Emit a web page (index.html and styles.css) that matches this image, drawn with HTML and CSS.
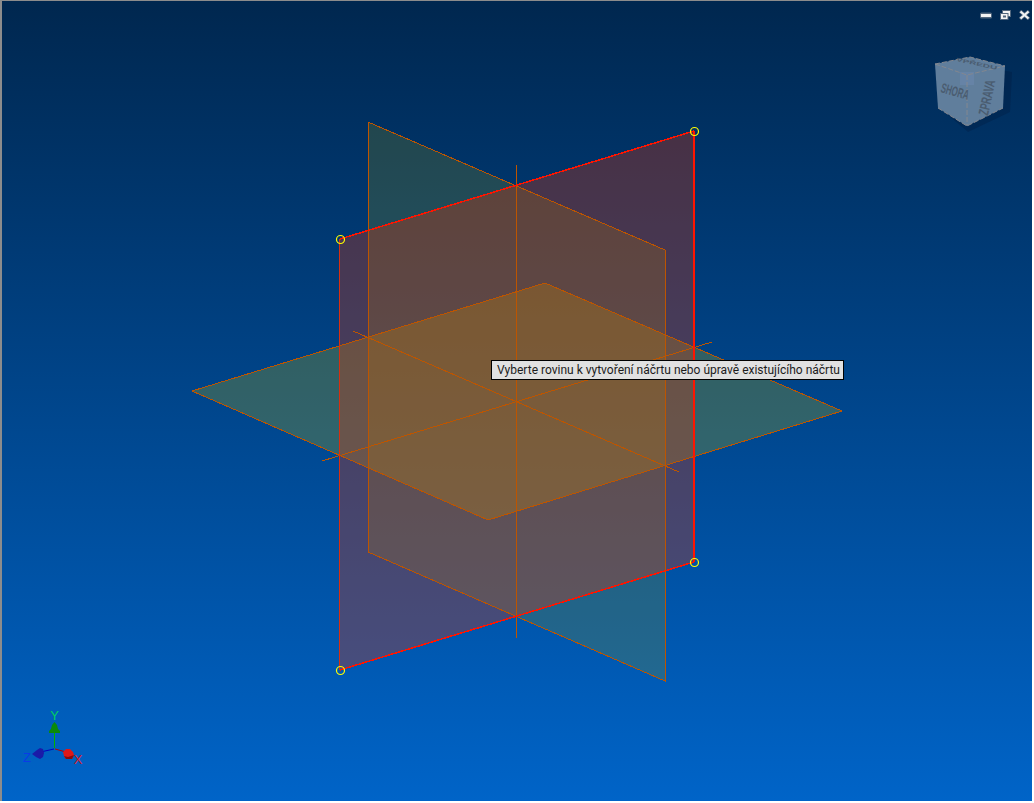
FILE: index.html
```html
<!DOCTYPE html>
<html lang="en">
<head>
    <meta charset="UTF-8">
    <meta name="viewport" content="width=device-width, initial-scale=1.0">
    <title>Vyberte rovinu</title>
    <link rel="stylesheet" href="styles.css">
</head>
<body>
    <div class="viewport">
        <!-- Window buttons -->
        <div class="window-btns">
            <svg class="win-icon" width="12" height="10" viewBox="0 0 12 10"><rect class="icon-halo" x="0" y="2.500" width="12" height="6" rx="1.500"/><rect class="icon-ink" x="1" y="4" width="10" height="3"/></svg>
            <svg class="win-icon" width="11" height="10" viewBox="0 0 11 10"><path class="icon-halo" d="M0 3h2V0h9v7H8.500v3H0z"/><path class="icon-ink" d="M1 4h6.500v5H1zM3 5.500V7.500h3V5.500z" fill-rule="evenodd"/><path class="icon-ink" d="M3 1h7v5H8.500V3H3z"/></svg>
            <svg class="win-icon" width="11" height="10" viewBox="0 0 11 10"><path class="icon-x-halo" d="M1 1l9 8M10 1l-9 8"/><path class="icon-x" d="M1.500 1.500l8 7M9.500 1.500l-8 7"/></svg>
        </div>

        <!-- The three origin planes -->
        <svg class="scene" width="1030" height="800" viewBox="2 1 1030 800">
            <polygon class="plane plane-top" points="192,391 545,283 842,411 488,520"/>
            <polygon class="plane plane-side" points="368,122 665,250 665,681 368,552"/>
            <polygon class="plane plane-front" points="340,239 694,131 694,562 340,670"/>

            <polygon class="edge" points="368,122 665,250 665,681 368,552"/>
            <polygon class="edge" points="192,391 545,283 842,411 488,520"/>
            <line class="edge" x1="516" y1="165" x2="516" y2="638"/>
            <line class="edge" x1="322" y1="461" x2="712" y2="342"/>
            <line class="edge" x1="353" y1="331" x2="679" y2="472"/>

            <line class="edge-red thin" x1="339" y1="239" x2="339" y2="670"/>
            <line class="edge-red" x1="340" y1="239" x2="694" y2="131"/>
            <line class="edge-red" x1="694" y1="131" x2="694" y2="562"/>
            <line class="edge-red" x1="694" y1="562" x2="340" y2="670"/>

            <circle class="handle" cx="340.500" cy="239.500" r="4"/>
            <circle class="handle" cx="694.500" cy="131.500" r="4"/>
            <circle class="handle" cx="694.500" cy="562.500" r="4"/>
            <circle class="handle" cx="340.500" cy="670.500" r="4"/>

            <!-- View cube -->
            <g class="cube">
                <polygon class="cube-shadow" points="942,110 968,132 1010,112 1012,72 1000,70 975,100"/>
                <polygon class="cube-face" points="935,64 970,57 1005,66 1003,108 967,126 938,108"/>
                <rect class="cube-corner" x="960" y="72" width="14" height="13"/>
                <path class="cube-seam" d="M935 64L967 75L1005 66M967 75V126M938 108L967 126L1003 108M935 64L970 57L1005 66"/>
                <text class="cube-label" transform="translate(940,92) rotate(16) scale(.72,1.250)">SHORA</text>
                <text class="cube-label" transform="translate(988,116) rotate(-78) scale(.82,1.300)">ZPRAVA</text>
                <text class="cube-label cube-label-top" transform="translate(956,61) rotate(12) scale(1,.5)">VPŘEDU</text>
            </g>

            <!-- Axis triad -->
            <g class="triad">
                <path class="axis axis-y" d="M54.500 748V728"/>
                <path class="axis axis-z" d="M54 749L36 753"/>
                <path class="axis axis-x" d="M55 749L66 752"/>
                <path class="cone-y" d="M54.500 722L57 725L58 729L60 731V733H49V731L51 729L52 725z"/>
                <path class="cone-z" d="M32 754L37 750L40 748L43 749L44 753L43 757L40 759L36 757z"/>
                <path class="cone-x" d="M63 752L66 749H70L73 752L74 755L72 759H66L64 756z"/>
                <path class="cone-x-dark" d="M64 756L68 757L74 755L72 759H66z"/>
                <text class="axis-label label-y" x="54.500" y="720">Y</text>
                <text class="axis-label label-z" x="27" y="762">Z</text>
                <text class="axis-label label-x" x="78" y="764">X</text>
            </g>
        </svg>

        <div class="tooltip">Vyberte rovinu k vytvoření náčrtu nebo úpravě existujícího náčrtu</div>
    </div>
</body>
</html>
```

FILE: styles.css
```css
html, body {
    margin: 0;
    padding: 0;
    background: white;
    overflow: hidden;
}

.viewport {
    position: relative;
    box-sizing: border-box;
    width: 1032px;
    height: 801px;
    border-top: 1px solid #8c8c8c;
    border-left: 2px solid #8c8c8c;
    background: linear-gradient(to bottom, #00274f, #0064c8);
    overflow: hidden;
}

.scene {
    display: block;
}

.window-btns {
    position: absolute;
    top: 9px;
    right: 2px;
    display: flex;
    gap: 8px;
    align-items: center;
}

.win-icon {
    display: block;
}

.icon-halo { fill: #51667d; }
.icon-ink { fill: #f2f2f2; }
.icon-x-halo {
    fill: none;
    stroke: #51667d;
    stroke-width: 3.500;
}
.icon-x {
    fill: none;
    stroke: #f2f2f2;
    stroke-width: 2.200;
}

.plane { stroke: none; }
.plane-side { fill: rgba(170, 160, 0, 0.2); }
.plane-front { fill: rgba(235, 50, 0, 0.3); }
.plane-top { fill: rgba(195, 185, 0, 0.25); }

.edge {
    fill: none;
    stroke: #bd5500;
    stroke-width: 1;
    shape-rendering: crispEdges;
}

.edge-red {
    stroke: #ff1500;
    stroke-width: 1.500;
    shape-rendering: crispEdges;
}

.edge-red.thin {
    stroke: #d8300f;
    stroke-width: 1;
}

.handle {
    fill: none;
    stroke: #ffff00;
    stroke-width: 1.200;
}

.cube-shadow { fill: rgba(0, 20, 50, 0.25); }
.cube-face { fill: #607e9c; }
.cube-corner { fill: #6683a6; }
.cube-seam {
    fill: none;
    stroke: #83878f;
    stroke-width: 1;
    stroke-dasharray: 5 2;
}

.cube-label {
    font-family: "Liberation Sans", sans-serif;
    font-size: 11px;
    font-weight: bold;
    fill: #4a5c70;
}

.cube-label-top { font-size: 10px; }

.axis { fill: none; stroke-width: 1; }
.axis-y { stroke: #00b400; }
.axis-z { stroke: #0000c0; }
.axis-x { stroke: #b40000; }

.cone-y { fill: #0a8a0a; }
.cone-z { fill: #1a1aa8; }
.cone-x { fill: #e01818; }
.cone-x-dark { fill: #8c0a0a; }

.axis-label {
    font-family: "Liberation Sans", sans-serif;
    font-size: 13px;
    text-anchor: middle;
}

.label-y { fill: #00d060; }
.label-z { fill: #0a3ce6; }
.label-x { fill: #d8202c; }

.tooltip {
    position: absolute;
    left: 489px;
    top: 359px;
    box-sizing: border-box;
    width: 353px;
    height: 20px;
    padding: 0 0 0 5px;
    border: 1px solid #000;
    background: #e1e1e1;
    color: #1c1c1c;
    font-family: Roboto, sans-serif;
    font-size: 12px;
    line-height: 18px;
    white-space: nowrap;
}
```
